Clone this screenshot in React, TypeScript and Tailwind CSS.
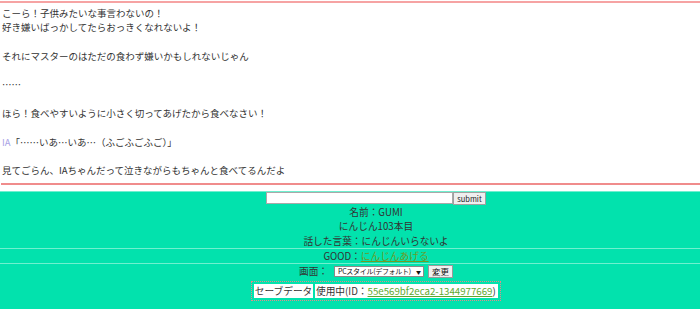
import React from "react";

const jp = { fontFamily: '"Noto Sans CJK JP", "Noto Sans", sans-serif' };

export default function App() {
  const lines: React.ReactNode[] = [
    "こーら！子供みたいな事言わないの！",
    "好き嫌いばっかしてたらおっきくなれないよ！",
    "",
    "それにマスターのはただの食わず嫌いかもしれないじゃん",
    "",
    "……",
    "",
    "ほら！食べやすいように小さく切ってあげたから食べなさい！",
    "",
    <>
      <span className="text-[#a9a3e6]">IA</span>「……いあ…いあ…（ふごふごふご）」
    </>,
    "",
    "見てごらん、IAちゃんだって泣きながらもちゃんと食べてるんだよ",
  ];
  return (
    <div className="w-[700px] h-[309px] overflow-hidden bg-white text-[#333]" style={jp}>
      <div className="border-t-2 border-[#f6a3a3] mt-[1px]" />
      <div className="pl-[2px] pt-[3px] pb-[5px] text-[9.5px] leading-[14.3px]">
        {lines.map((l, i) => (
          <div key={i} className="h-[14.3px] whitespace-nowrap">
            {l}
          </div>
        ))}
      </div>
      <div className="ml-[1px] border-t-2 border-[#f08c8c]" />
      <div className="h-[6px]" />
      <div className="bg-[#02e2ad] h-[200px] text-[9.7px] text-[#333]">
        <div className="h-[1px] bg-[#6ff0cf]" />
        <div className="flex justify-center pl-[52px] h-[13px] items-start">
          <div className="w-[187px] h-[12px] bg-white border border-[#a9a9a9]" />
          <div className="w-[33px] h-[13px] bg-[#efefef] border border-[#a0a0a0] text-[7.5px] leading-[11px] text-center text-[#222]">
            submit
          </div>
        </div>
        <div className="flex justify-center pl-[52px] h-[14px] leading-[14px]">名前：GUMI</div>
        <div className="flex justify-center pl-[52px] h-[15px] leading-[15px]">にんじん103本目</div>
        <div className="flex justify-center pl-[52px] h-[14px] leading-[14px]">話した言葉：にんじんいらないよ</div>
        <div className="h-[1px] bg-[#6ff0cf]" />
        <div className="flex justify-center pl-[52px] h-[14px] leading-[14px]">
          GOOD：<span className="text-[#6e9a26] underline">にんじんあげる</span>
        </div>
        <div className="h-[1px] bg-[#6ff0cf]" />
        <div className="flex justify-center items-center pl-[52px] h-[16px]">
          <span className="mr-[6px]">画面：</span>
          <div className="w-[90px] h-[11px] bg-white border border-[#8a8a8a] flex items-center justify-between pl-[3px] pr-[2px] text-[7px] leading-[9px] text-[#111] whitespace-nowrap overflow-hidden">
            <span className="tracking-[-0.3px]">PCスタイル(デフォルト)</span>
            <span className="text-[5px]">▼</span>
          </div>
          <div className="ml-[4px] w-[25px] h-[13px] bg-[#efefef] border border-[#9a9a9a] text-[8.5px] leading-[11px] text-center text-[#111]">
            変更
          </div>
        </div>
        <div className="flex justify-center pl-[52px] mt-[1px]">
          <div className="flex gap-[2px] p-[2px] border border-dotted border-[#e58a8a]">
            <div className="bg-white w-[59px] h-[14px] leading-[14px] text-center">セーブデータ</div>
            <div className="bg-white w-[183px] h-[14px] leading-[14px] pl-[1px] whitespace-nowrap">
              使用中(ID：<span className="text-[#5ea82e] underline">55e569bf2eca2-1344977669</span>)
            </div>
          </div>
        </div>
      </div>
    </div>
  );
}
